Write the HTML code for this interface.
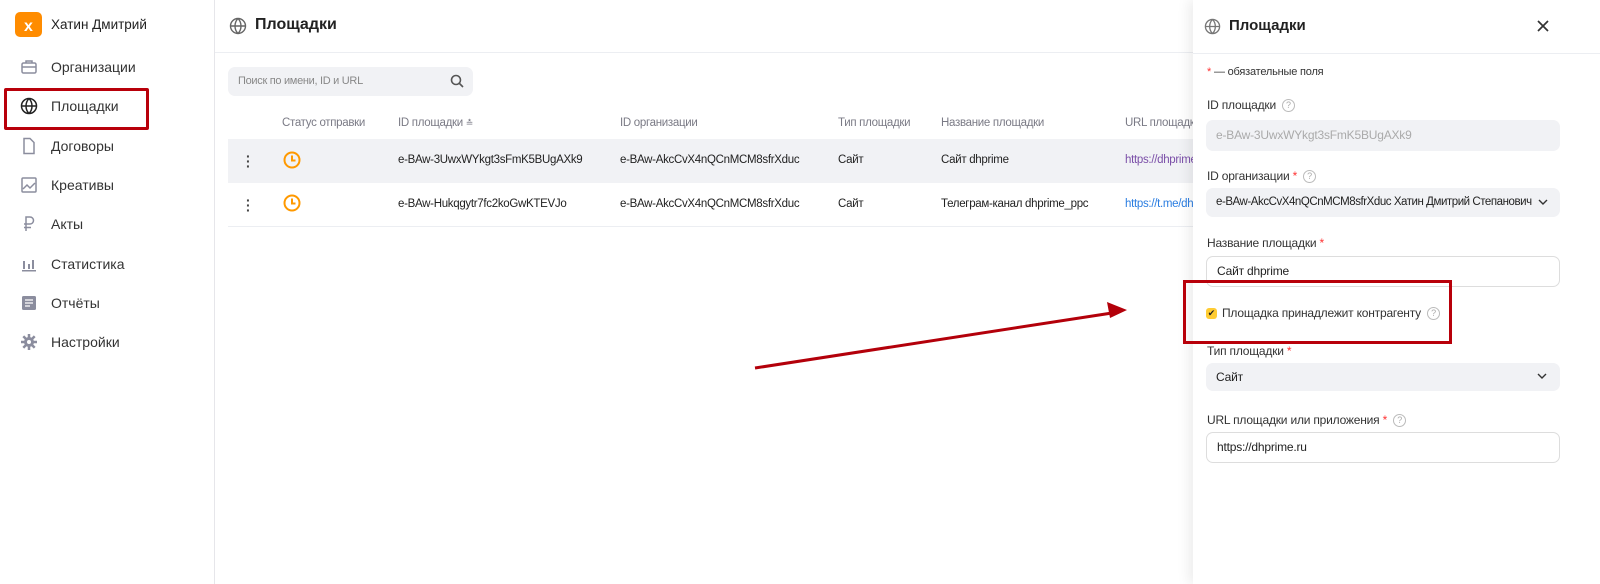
<!DOCTYPE html>
<html><head><meta charset="utf-8"><style>
*{box-sizing:border-box;margin:0;padding:0}
body{width:1600px;height:584px;overflow:hidden;background:#fff;font-family:"Liberation Sans",sans-serif;color:#222;position:relative}
.abs{position:absolute}
.side{left:0;top:0;width:215px;height:584px;border-right:1px solid #e6e6ea}
.nav{position:absolute;left:20px;font-size:14px;color:#333;display:flex;align-items:center}
.nav svg{width:18px;height:18px;margin-right:13px}
.th{position:absolute;top:116px;font-size:11.5px;color:#7a7a85;letter-spacing:-.3px;line-height:14px;height:14px;white-space:nowrap}
.td{position:absolute;font-size:11.5px;color:#222;letter-spacing:-.3px;white-space:nowrap}
.lbl{position:absolute;left:1207px;font-size:12px;color:#333;letter-spacing:-.2px;white-space:nowrap}
.star{color:#f33}
.q{display:inline-block;width:13px;height:13px;border:1px solid #bbb;border-radius:50%;font-size:9px;color:#aaa;text-align:center;line-height:11px;margin-left:6px;vertical-align:middle}
.field{position:absolute;left:1206px;width:354px;height:31px;border-radius:7px;font-size:12px;padding-left:10px;line-height:31px;letter-spacing:-.2px;white-space:nowrap;overflow:hidden}
</style></head><body>
<div class="abs side"></div>
<div class="abs" style="left:15px;top:12px;width:27px;height:25px;background:#ff8c00;border-radius:5px;color:#fff;font-weight:bold;font-size:16px;text-align:center;line-height:30px">x</div>
<div class="abs" style="left:51px;top:17px;font-size:13.5px">Хатин Дмитрий</div>
<div class="nav" style="top:58px"><svg viewBox="0 0 18 18" fill="none" stroke="#8b8d9e" stroke-width="1.5"><rect x="2" y="5" width="14" height="10" rx="1.5"/><path d="M6 5V3h6v2M2 9h14"/></svg>Организации</div>
<div class="nav" style="top:97px"><svg viewBox="0 0 18 18" fill="none" stroke="#222" stroke-width="1.5"><circle cx="9" cy="9" r="7.5"/><path d="M1.5 9h15M9 1.5c-4 4-4 11 0 15M9 1.5c4 4 4 11 0 15"/></svg>Площадки</div>
<div class="abs" style="left:4px;top:88px;width:145px;height:42px;border:3px solid #b8000a;border-radius:2px"></div>
<div class="nav" style="top:137px"><svg viewBox="0 0 18 18" fill="none" stroke="#8b8d9e" stroke-width="1.5"><path d="M4 1.5h6l4 4v11H4z"/></svg>Договоры</div>
<div class="nav" style="top:176px"><svg viewBox="0 0 18 18" fill="none" stroke="#8b8d9e" stroke-width="1.5"><rect x="2" y="2" width="14" height="14" rx="1"/><path d="M3 13l4-4 3 3 5-5"/></svg>Креативы</div>
<div class="nav" style="top:215px"><svg viewBox="0 0 18 18" fill="none" stroke="#8b8d9e" stroke-width="1.5"><path d="M6 16V2h4a3.5 3.5 0 0 1 0 7H4M4 12.5h7"/></svg>Акты</div>
<div class="nav" style="top:255px"><svg viewBox="0 0 18 18" fill="#8b8d9e"><rect x="3" y="6" width="2" height="8"/><rect x="8" y="9" width="2" height="5"/><rect x="12" y="5" width="2" height="9"/><rect x="2" y="15" width="14" height="1.5"/></svg>Статистика</div>
<div class="nav" style="top:294px"><svg viewBox="0 0 18 18"><rect x="2" y="2" width="14" height="14" rx="1.5" fill="#8b8d9e"/><path d="M5 6h8M5 9h8M5 12h5" stroke="#fff" stroke-width="1.3"/></svg>Отчёты</div>
<div class="nav" style="top:333px"><svg viewBox="0 0 18 18"><circle cx="9" cy="9" r="5" fill="#8b8d9e"/><path d="M9 1v16M1 9h16M3.3 3.3l11.4 11.4M14.7 3.3L3.3 14.7" stroke="#8b8d9e" stroke-width="2.5"/><circle cx="9" cy="9" r="2" fill="#fff"/></svg>Настройки</div>

<svg class="abs" style="left:229px;top:17px" width="18" height="18" viewBox="0 0 18 18" fill="none" stroke="#666" stroke-width="1.4"><circle cx="9" cy="9" r="7.5"/><path d="M1.5 9h15M9 1.5c-4 4-4 11 0 15M9 1.5c4 4 4 11 0 15"/></svg>
<div class="abs" style="left:255px;top:16px;font-size:16px;font-weight:bold">Площадки</div>
<div class="abs" style="left:215px;top:52px;width:980px;height:1px;background:#eceef2"></div>
<div class="abs" style="left:228px;top:67px;width:245px;height:29px;background:#f1f2f5;border-radius:7px;font-size:11px;color:#888;padding-left:10px;line-height:29px;letter-spacing:-.3px">Поиск по имени, ID и URL</div>
<svg class="abs" style="left:450px;top:74px" width="14" height="14" viewBox="0 0 14 14" fill="none" stroke="#555" stroke-width="1.6"><circle cx="6" cy="6" r="4.5"/><path d="M9.5 9.5l3.5 3.5"/></svg>
<div class="th" style="left:282px">Статус отправки</div>
<div class="th" style="left:398px">ID площадки <span style="font-size:9px">≛</span></div>
<div class="th" style="left:620px">ID организации</div>
<div class="th" style="left:838px">Тип площадки</div>
<div class="th" style="left:941px">Название площадки</div>
<div class="th" style="left:1125px">URL площадки</div>
<div class="abs" style="left:228px;top:139px;width:967px;height:44px;background:#f1f2f5"></div>
<div class="abs" style="left:228px;top:226px;width:967px;height:1px;background:#eceef2"></div>
<div class="abs" style="left:246px;top:154px;font-size:14px;font-weight:bold;line-height:5px;color:#444">·<br>·<br>·</div>
<div class="abs" style="left:246px;top:198px;font-size:14px;font-weight:bold;line-height:5px;color:#444">·<br>·<br>·</div>
<svg class="abs" style="left:283px;top:151px" width="18" height="18" viewBox="0 0 18 18" fill="none" stroke="#f90" stroke-width="2"><circle cx="9" cy="9" r="7.5"/><path d="M9 4.5V9.5h3.5"/></svg>
<svg class="abs" style="left:283px;top:194px" width="18" height="18" viewBox="0 0 18 18" fill="none" stroke="#f90" stroke-width="2"><circle cx="9" cy="9" r="7.5"/><path d="M9 4.5V9.5h3.5"/></svg>
<div class="td" style="left:398px;top:154px">e-BAw-3UwxWYkgt3sFmK5BUgAXk9</div>
<div class="td" style="left:620px;top:154px">e-BAw-AkcCvX4nQCnMCM8sfrXduc</div>
<div class="td" style="left:838px;top:154px">Сайт</div>
<div class="td" style="left:941px;top:154px">Сайт dhprime</div>
<div class="td" style="left:1125px;top:154px;color:#7b4fa8">https://dhprime</div>
<div class="td" style="left:398px;top:198px">e-BAw-Hukqgytr7fc2koGwKTEVJo</div>
<div class="td" style="left:620px;top:198px">e-BAw-AkcCvX4nQCnMCM8sfrXduc</div>
<div class="td" style="left:838px;top:198px">Сайт</div>
<div class="td" style="left:941px;top:198px">Телеграм-канал dhprime_ppc</div>
<div class="td" style="left:1125px;top:198px;color:#2a7de1">https://t.me/dh</div>

<svg class="abs" style="left:0;top:0" width="1600" height="584"><path d="M755 368L1112 313" stroke="#b3000a" stroke-width="3"/><path d="M1127 310l-20-8 3 16z" fill="#b3000a"/></svg>

<div class="abs" style="left:1193px;top:0;width:407px;height:584px;background:#fff;box-shadow:-4px 0 12px rgba(0,0,0,.08)"></div>
<div class="abs" style="left:1193px;top:53px;width:407px;height:1px;background:#eceef2"></div>
<svg class="abs" style="left:1204px;top:18px" width="17" height="17" viewBox="0 0 18 18" fill="none" stroke="#777" stroke-width="1.4"><circle cx="9" cy="9" r="7.5"/><path d="M1.5 9h15M9 1.5c-4 4-4 11 0 15M9 1.5c4 4 4 11 0 15"/></svg>
<div class="abs" style="left:1229px;top:17px;font-size:15px;font-weight:bold">Площадки</div>
<svg class="abs" style="left:1537px;top:20px" width="12" height="12" viewBox="0 0 12 12" stroke="#333" stroke-width="1.7"><path d="M1 1l10 10M11 1L1 11"/></svg>
<div class="lbl" style="top:66px;font-size:11px"><span class="star">*</span> — обязательные поля</div>
<div class="lbl" style="top:98px">ID площадки<span class="q">?</span></div>
<div class="field" style="top:120px;background:#f1f2f5;color:#aaa">e-BAw-3UwxWYkgt3sFmK5BUgAXk9</div>
<div class="lbl" style="top:169px">ID организации <span class="star">*</span><span class="q">?</span></div>
<div class="field" style="top:188px;background:#f1f2f5;color:#222;height:29px;line-height:29px;font-size:11.5px;letter-spacing:-.45px">e-BAw-AkcCvX4nQCnMCM8sfrXduc Хатин Дмитрий Степанович</div>
<svg class="abs" style="left:1538px;top:199px" width="10" height="7" viewBox="0 0 10 7" fill="none" stroke="#333" stroke-width="1.4"><path d="M1 1l4 4 4-4"/></svg>
<div class="lbl" style="top:236px">Название площадки <span class="star">*</span></div>
<div class="field" style="top:256px;border:1px solid #ddd;line-height:29px">Сайт dhprime</div>
<div class="abs" style="left:1206px;top:308px;width:11px;height:11px;background:#fc3;border-radius:3px;font-size:9px;text-align:center;line-height:11px">✔</div>
<div class="lbl" style="left:1222px;top:306px">Площадка принадлежит контрагенту<span class="q">?</span></div>
<div class="abs" style="left:1183px;top:280px;width:269px;height:64px;border:3px solid #b8000a"></div>
<div class="lbl" style="top:344px">Тип площадки <span class="star">*</span></div>
<div class="field" style="top:363px;background:#f1f2f5;height:28px;line-height:28px">Сайт</div>
<svg class="abs" style="left:1537px;top:373px" width="10" height="7" viewBox="0 0 10 7" fill="none" stroke="#333" stroke-width="1.4"><path d="M1 1l4 4 4-4"/></svg>
<div class="lbl" style="top:413px">URL площадки или приложения <span class="star">*</span><span class="q">?</span></div>
<div class="field" style="top:432px;border:1px solid #ddd;line-height:29px">https://dhprime.ru</div>
</body></html>
